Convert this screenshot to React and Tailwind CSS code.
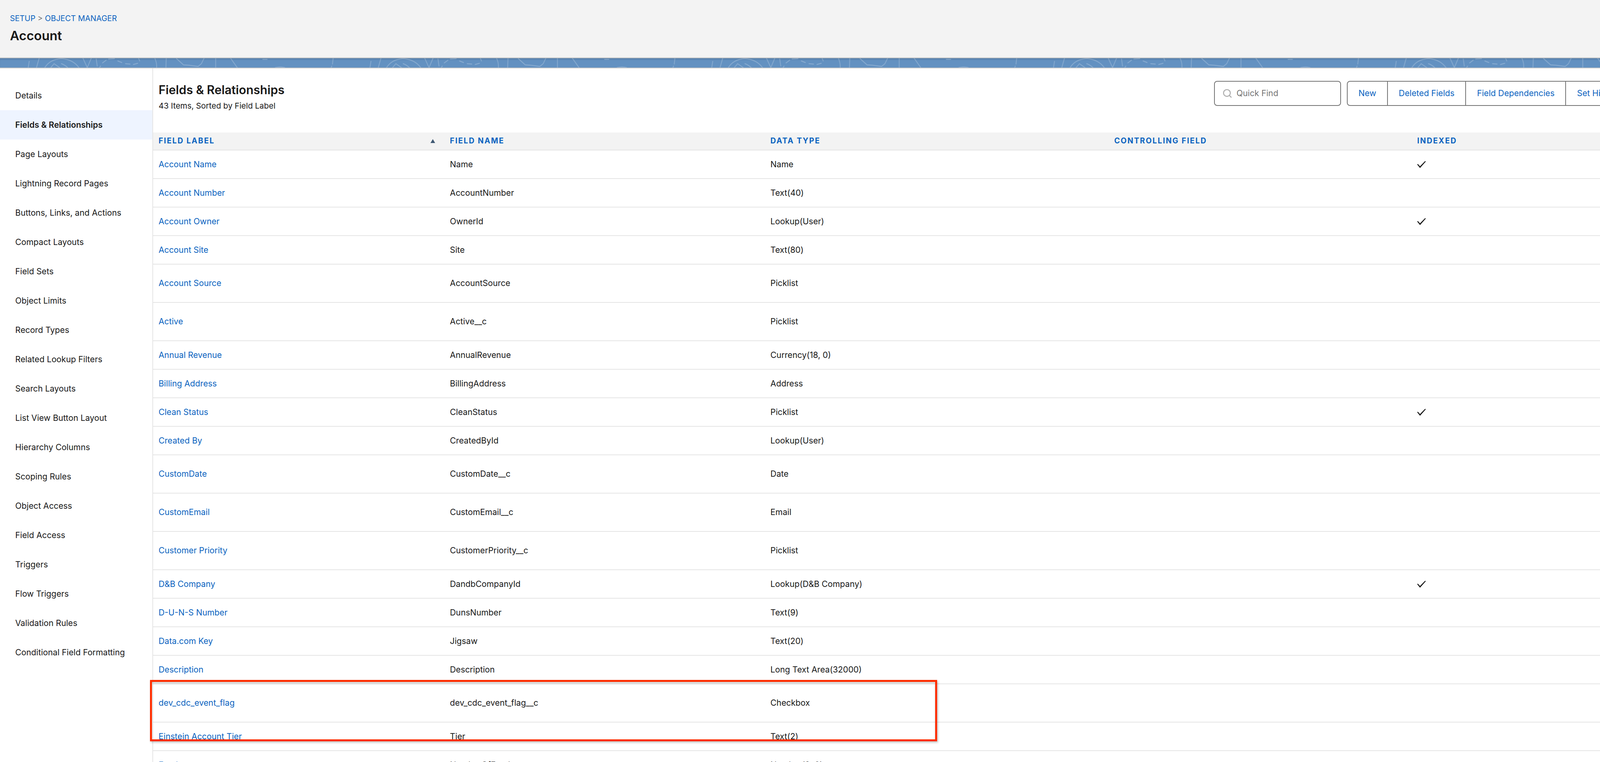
import { Search } from "lucide-react";

const NAV_ITEMS = [
  "Details",
  "Fields & Relationships",
  "Page Layouts",
  "Lightning Record Pages",
  "Buttons, Links, and Actions",
  "Compact Layouts",
  "Field Sets",
  "Object Limits",
  "Record Types",
  "Related Lookup Filters",
  "Search Layouts",
  "List View Button Layout",
  "Hierarchy Columns",
  "Scoping Rules",
  "Object Access",
  "Field Access",
  "Triggers",
  "Flow Triggers",
  "Validation Rules",
  "Conditional Field Formatting",
];

// label, api name, type, indexed, tall row
const FIELDS = [
  ["Account Name", "Name", "Name", true],
  ["Account Number", "AccountNumber", "Text(40)"],
  ["Account Owner", "OwnerId", "Lookup(User)", true],
  ["Account Site", "Site", "Text(80)"],
  ["Account Source", "AccountSource", "Picklist", false, true],
  ["Active", "Active__c", "Picklist", false, true],
  ["Annual Revenue", "AnnualRevenue", "Currency(18, 0)"],
  ["Billing Address", "BillingAddress", "Address"],
  ["Clean Status", "CleanStatus", "Picklist", true],
  ["Created By", "CreatedById", "Lookup(User)"],
  ["CustomDate", "CustomDate__c", "Date", false, true],
  ["CustomEmail", "CustomEmail__c", "Email", false, true],
  ["Customer Priority", "CustomerPriority__c", "Picklist", false, true],
  ["D&B Company", "DandbCompanyId", "Lookup(D&B Company)", true],
  ["D-U-N-S Number", "DunsNumber", "Text(9)"],
  ["Data.com Key", "Jigsaw", "Text(20)"],
  ["Description", "Description", "Long Text Area(32000)"],
  ["dev_cdc_event_flag", "dev_cdc_event_flag__c", "Checkbox", false, true],
  ["Einstein Account Tier", "Tier", "Text(2)"],
  ["Employees", "NumberOfEmployees", "Number(8, 0)"],
];

const COLUMNS = ["Field Name", "Data Type", "Controlling Field", "Indexed"];
const ACTIONS = ["New", "Deleted Fields", "Field Dependencies", "Set History Tracking"];
const ROW_GRID = "grid grid-cols-[878fr_966fr_1036fr_913fr_551fr] pl-[0.332vw]";

function BannerArt() {
  return (
    <svg
      className="absolute inset-0 h-full w-full"
      viewBox="0 0 4822 24"
      preserveAspectRatio="none"
      aria-hidden="true"
    >
      <defs>
        <pattern id="banner-tile" width="1030" height="24" patternUnits="userSpaceOnUse">
          <g fill="none" stroke="#ffffff" strokeOpacity="0.22" strokeWidth="2.4" strokeLinecap="round">
            <path d="M88 8L85 24M118 0L110 24" />
            <path d="M135 24Q150 3 185 1Q220 3 238 24" />
            <path d="M153 24L163 14L180 24M185 14Q195 17 204 24" />
            <path d="M250 0L263 24L275 0M290 2L293 20M300 24L303 20" />
            <path d="M309 12L320 5M327 2L345 1M355 7L367 11M378 14L392 15M402 16L415 13M418 1L421 7" />
            <path d="M467 1Q473 12 472 24M501 0L500 24" />
            <path d="M532 1L553 17L570 18L597 21L607 14L615 0" />
            <path d="M650 0L650 24M695 0L715 24M792 3L805 3M830 24Q845 21 858 24M1004 0L1002 15M1000 20L998 24" />
          </g>
        </pattern>
      </defs>
      <rect width="4822" height="24" fill="url(#banner-tile)" />
    </svg>
  );
}

function CheckMark() {
  return (
    <svg viewBox="0 0 26 18" className="block h-[18px] w-[0.54vw]" preserveAspectRatio="none" aria-hidden="true">
      <path d="M0 9L2 7.5L8.5 13.5L24 0L26 1.5L8.5 18Z" fill="#181818" />
    </svg>
  );
}

function SortArrow() {
  return (
    <svg width="12" height="10" viewBox="0 0 14 10" preserveAspectRatio="none" className="block" aria-hidden="true">
      <path d="M7 0L14 10H0Z" fill="#3e5872" />
    </svg>
  );
}

export default function App() {
  return (
    <div className="relative h-screen w-full overflow-hidden bg-white [font-family:Inter,sans-serif] text-[0.5185vw] text-[#181818]">
      <header className="h-[149px] border-b-2 border-[#c9c9c9] bg-[#f3f3f3] pl-[0.622vw] pt-[31px]">
        <div className="text-[0.4873vw] leading-[32px] text-[#747474]">
          <a className="text-[#0b63c0]">SETUP</a> &gt; <a className="text-[#0b63c0]">OBJECT MANAGER</a>
        </div>
        <h1 className="mt-[4px] text-[0.8vw] font-semibold leading-[48px]">Account</h1>
      </header>

      <div className="relative h-[26px] border-b-2 border-[#c9c9c9] bg-[#6391c1] shadow-[inset_0_5px_4px_-2px_rgba(0,0,0,0.14)]">
        <BannerArt />
      </div>

      <div className="flex">
        <nav className="h-[1775px] w-[9.58%] shrink-0 border-r-2 border-[#e5e5e5] pt-[32px]">
          {NAV_ITEMS.map((item, i) => (
            <div
              key={item}
              className={`flex h-[75px] items-center pl-[0.954vw] ${
                i === 1 ? "bg-[#eef4ff] font-semibold" : ""
              }`}
            >
              {item}
            </div>
          ))}
        </nav>

        <main className="min-w-0 flex-1">
          <div className="flex h-[164px] items-start">
            <div className="flex-1 pl-[0.332vw] pt-[35px]">
              <h2 className="text-[0.7466vw] font-semibold leading-[40px]">Fields &amp; Relationships</h2>
              <p className="mt-[5px] text-[0.4977vw] leading-[32px]">43 Items, Sorted by Field Label</p>
            </div>
            <div className="mt-[32px] flex w-[26.67%] shrink-0 items-start overflow-hidden">
              <div className="flex h-[64px] w-[32.85%] shrink-0 items-center rounded-lg border-2 border-[#747474] pl-[0.456vw] text-[#747474]">
                <Search size={26} strokeWidth={2.4} className="mr-[0.26vw] text-[#aeaeae]" />
                Quick Find
              </div>
              <div className="ml-[0.373vw] flex h-[64px] shrink-0 rounded-lg border-2 border-[#747474] text-[#0b63c0]">
                {ACTIONS.map((label, i) => (
                  <button
                    key={label}
                    className={`h-full whitespace-nowrap px-[0.68vw] ${i > 0 ? "border-l-2 border-[#747474]" : ""}`}
                  >
                    {label}
                  </button>
                ))}
              </div>
            </div>
          </div>

          <div className={`${ROW_GRID} h-[46px] items-center border-b-2 border-[#e5e5e5] bg-[#f3f3f3] text-[0.477vw] font-bold uppercase tracking-[0.11em] text-[#0b63c0]`}>
            <div className="flex items-center justify-between pr-[0.933vw]">
              Field Label
              <SortArrow />
            </div>
            {COLUMNS.map((col) => (
              <div key={col}>{col}</div>
            ))}
          </div>

          {FIELDS.map(([label, apiName, type, indexed, tall]) => (
            <div
              key={label}
              className={`${ROW_GRID} items-center border-b-2 border-[#e5e5e5] ${tall ? "h-[98px]" : "h-[73px]"}`}
            >
              <a className="text-[#0b63c0]">{label}</a>
              <div>{apiName}</div>
              <div>{type}</div>
              <div />
              <div>{indexed && <CheckMark />}</div>
            </div>
          ))}
        </main>
      </div>

      {/* red annotation drawn on top of the screenshot */}
      <div className="absolute left-[9.37%] top-[1740px] h-[157px] w-[49.19%] border-[5px] border-[#ff2d00] shadow-[2px_3px_5px_rgba(0,0,0,0.25),inset_0_4px_4px_rgba(0,0,0,0.18)]" />
    </div>
  );
}
